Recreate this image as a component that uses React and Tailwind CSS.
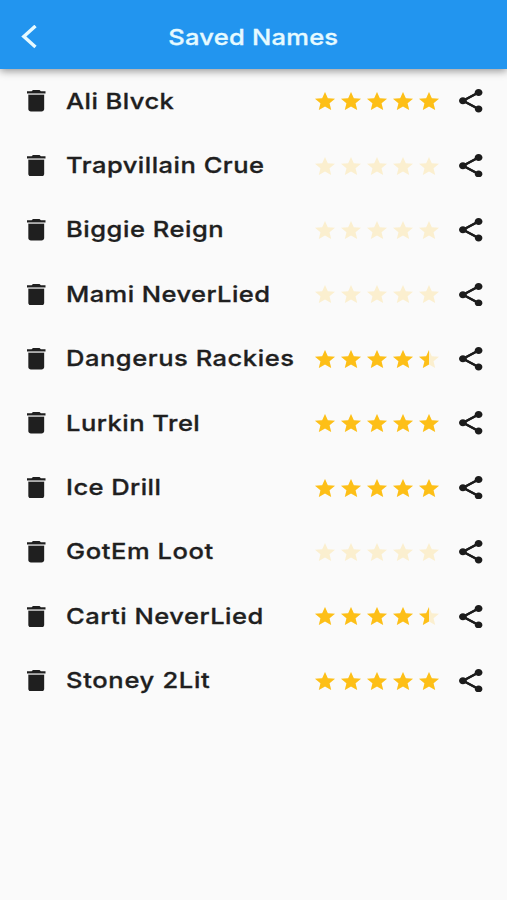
import React from 'react';

const names = [
  { name: 'Ali Blvck', rating: 5, spacing: 'tracking-[0.38px]' },
  { name: 'Trapvillain Crue', rating: 0, spacing: 'tracking-[0.42px]' },
  { name: 'Biggie Reign', rating: 0, spacing: 'tracking-[0.46px]' },
  { name: 'Mami NeverLied', rating: 0, spacing: 'tracking-[0.36px]' },
  { name: 'Dangerus Rackies', rating: 4.5, spacing: 'tracking-[0.46px]' },
  { name: 'Lurkin Trel', rating: 5, spacing: 'tracking-[0.42px]' },
  { name: 'Ice Drill', rating: 5, spacing: 'tracking-[0.38px]' },
  { name: 'GotEm Loot', rating: 0, spacing: 'tracking-[0.5px]' },
  { name: 'Carti NeverLied', rating: 4.5, spacing: 'tracking-[0.43px]' },
  { name: 'Stoney 2Lit', rating: 5, spacing: 'tracking-[0.58px]' },
];

const STAR = 'M12 17.27L18.18 21l-1.64-7.03L22 9.24l-7.19-.61L12 2 9.19 8.63 2 9.24l5.46 4.73L5.82 21z';

function TrashIcon() {
  return (
    <svg viewBox="5 3 14 18" preserveAspectRatio="none" className="h-[21.5px] w-[18.5px] shrink-0 fill-[#1f1f1f]">
      <path d="M6 19c0 1.1.9 2 2 2h8c1.1 0 2-.9 2-2V7H6v12z" />
      <path d="M19 4h-3.5l-1-1h-5l-1 1H5v2h14V4z" />
      <path d="M6 6h12v1H6z" className="fill-[#a8a8a8]" />
    </svg>
  );
}

function ShareIcon() {
  return (
    <svg viewBox="3 2 18 20" preserveAspectRatio="none" className="h-[23.5px] w-[23.5px] shrink-0 fill-[#1c1c1c]">
      <path d="M18 16.08c-.76 0-1.44.3-1.96.77L8.91 12.7c.05-.23.09-.46.09-.7s-.04-.47-.09-.7l7.05-4.11c.54.5 1.25.81 2.04.81 1.66 0 3-1.34 3-3s-1.34-3-3-3-3 1.34-3 3c0 .24.04.47.09.7L8.04 9.81C7.5 9.31 6.79 9 6 9c-1.66 0-3 1.34-3 3s1.34 3 3 3c.79 0 1.5-.31 2.04-.81l7.12 4.16c-.05.21-.08.43-.08.65 0 1.61 1.31 2.92 2.92 2.92s2.92-1.31 2.92-2.92-1.31-2.92-2.92-2.92z" />
      <path d="M18 5L6 12l12 7" className="fill-none stroke-[#1c1c1c] stroke-[1.9]" />
    </svg>
  );
}

// fill: 0, 0.5 or 1
function Star({ fill }) {
  return (
    <svg viewBox="2 2 20 19" preserveAspectRatio="none" className="h-[18px] w-5">
      <path d={STAR} className="fill-[#fbefcf]" />
      {fill > 0 && (
        <svg x="2" y="2" width={20 * fill} height="19" viewBox={`2 2 ${20 * fill} 19`} preserveAspectRatio="none">
          <path d={STAR} className="fill-[#fdbf17]" />
        </svg>
      )}
    </svg>
  );
}

function NameRow({ name, rating, spacing }) {
  return (
    <li className="flex h-[64.4px] items-center pl-[27.3px] pr-[24.5px]">
      <TrashIcon />
      <div className="ml-[20.2px] flex-1">
        <span className={`inline-block origin-left scale-x-[1.16] whitespace-nowrap text-[22px] font-medium text-[#1f1f1f] [-webkit-text-stroke:0.3px_#1f1f1f] ${spacing}`}>
          {name}
        </span>
      </div>
      <div className="mr-5 flex gap-1.5">
        {[0, 1, 2, 3, 4].map((i) => (
          <Star key={i} fill={Math.max(0, Math.min(1, rating - i))} />
        ))}
      </div>
      <ShareIcon />
    </li>
  );
}

export default function App() {
  return (
    <div className="h-[900px] w-full overflow-hidden bg-[#fafafa] font-['Inter',sans-serif]">
      <header className="relative z-10 grid h-[69px] grid-cols-[1fr_auto_1fr] items-center bg-[#2295ef] pt-[5px] shadow-[0_2px_8px_rgba(0,0,0,0.42)]">
        <svg viewBox="0 0 16 24" className="ml-[20.5px] h-6 w-4 fill-none stroke-[#e6faff] stroke-[3.4]">
          <path d="M14.5 1L2.8 11.5l11.7 10.5" />
        </svg>
        <h1 className="scale-x-[1.16] text-[22px] font-medium tracking-[0.2px] text-[#e6faff] [-webkit-text-stroke:0.3px_#e6faff]">Saved Names</h1>
      </header>
      <ul>
        {names.map((item) => (
          <NameRow key={item.name} {...item} />
        ))}
      </ul>
    </div>
  );
}
